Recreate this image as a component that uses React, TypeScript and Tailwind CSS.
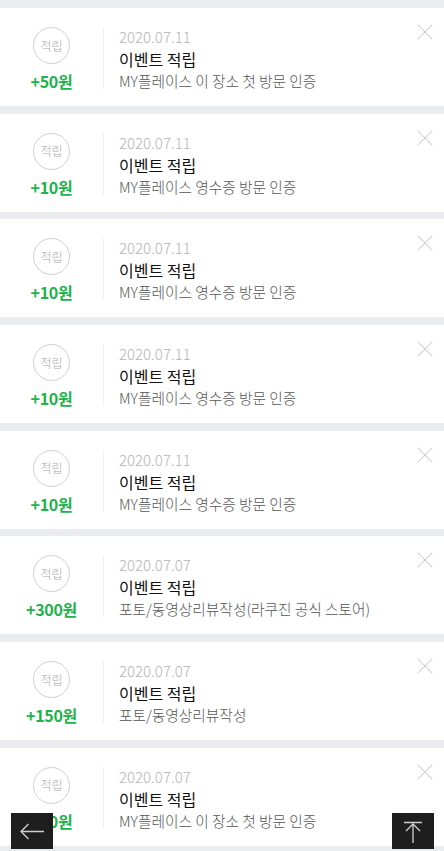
import { X } from 'lucide-react';

type Item = { date: string; amount: string; desc: string };

const items: Item[] = [
    { date: '2020.07.11', amount: '+50원', desc: 'MY플레이스 이 장소 첫 방문 인증' },
    { date: '2020.07.11', amount: '+10원', desc: 'MY플레이스 영수증 방문 인증' },
    { date: '2020.07.11', amount: '+10원', desc: 'MY플레이스 영수증 방문 인증' },
    { date: '2020.07.11', amount: '+10원', desc: 'MY플레이스 영수증 방문 인증' },
    { date: '2020.07.11', amount: '+10원', desc: 'MY플레이스 영수증 방문 인증' },
    { date: '2020.07.07', amount: '+300원', desc: '포토/동영상리뷰작성(라쿠진 공식 스토어)' },
    { date: '2020.07.07', amount: '+150원', desc: '포토/동영상리뷰작성' },
    { date: '2020.07.07', amount: '+50원', desc: 'MY플레이스 이 장소 첫 방문 인증' },
];

function PointCard({ item }: { item: Item }) {
    return (
        <div className="relative flex h-[98px] shrink-0 bg-white">
            <div className="flex w-[103px] flex-col items-center pt-[19px]">
                <div className="flex h-[37px] w-[37px] items-center justify-center rounded-full border border-[#cfcfcf] text-[12px] font-light text-[#a8a8a8]">
                    적립
                </div>
                <div className="mt-[7px] text-[16px] font-bold leading-[20px] tracking-[-0.3px] text-[#22b24c]">
                    {item.amount}
                </div>
            </div>
            <div className="mt-[19px] h-[62px] w-px bg-[#f0f0f0]" />
            <div className="flex flex-col pl-[15px] pt-[19px]">
                <div className="text-[15px] font-light leading-[20px] text-[#b4b4b4]">{item.date}</div>
                <div className="mt-[1px] text-[16px] leading-[22px] text-[#111]">이벤트 적립</div>
                <div className="mt-[1px] text-[14.7px] font-light leading-[20px] text-[#555]">{item.desc}</div>
            </div>
            <button className="absolute right-[5px] top-[10px] text-[#cacaca]">
                <X className="h-[28px] w-[28px]" strokeWidth={0.9} />
            </button>
        </div>
    );
}

export default function App() {
    return (
        <div
            className="relative h-[851px] w-[444px] overflow-hidden bg-[#eaecef]"
            style={{ fontFamily: '"Noto Sans CJK KR", "Noto Sans", sans-serif' }}
        >
            <div className="flex flex-col gap-[7.7px] pt-[8px]">
                {items.map((item, i) => (
                    <PointCard key={i} item={item} />
                ))}
            </div>

            {/* floating nav buttons */}
            <button className="absolute left-[11px] top-[813px] flex h-[36px] w-[42px] items-center justify-center bg-[#1e1e1e]">
                <svg width="42" height="36" viewBox="0 0 42 36" fill="none" stroke="#cfcfcf" strokeWidth="1.3">
                    <path d="M10 18.5h23M17.5 11l-7.5 7.5 7.5 7.5" />
                </svg>
            </button>
            <button className="absolute left-[392px] top-[813px] flex h-[36px] w-[42px] items-center justify-center bg-[#1e1e1e]">
                <svg width="42" height="36" viewBox="0 0 42 36" fill="none" stroke="#cfcfcf" strokeWidth="1.3">
                    <path d="M12 9.5h18M21 11v19M14 18l7-7 7 7" />
                </svg>
            </button>
        </div>
    );
}
